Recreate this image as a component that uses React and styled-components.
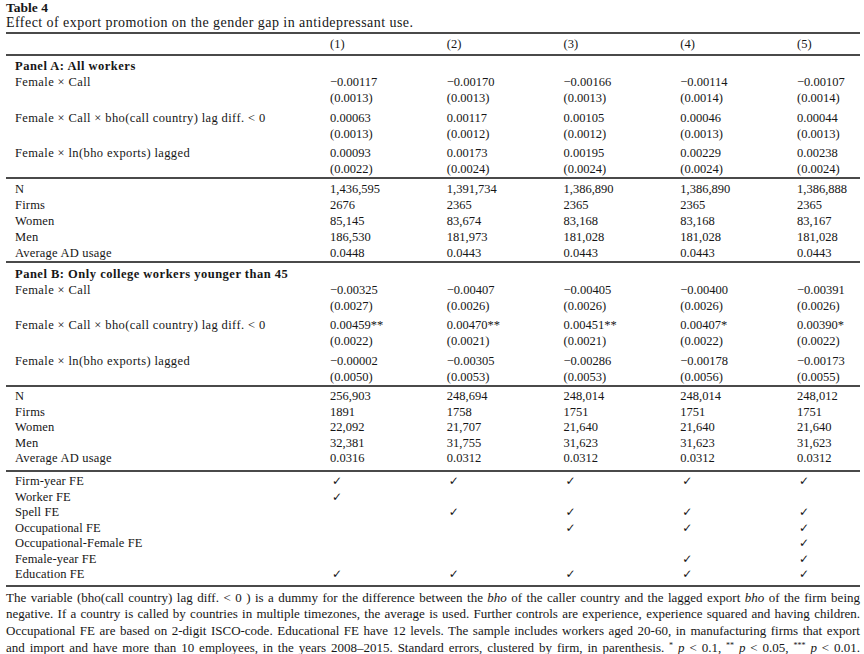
import styled, { createGlobalStyle } from "styled-components";

const GlobalStyle = createGlobalStyle`
    html, body {
        margin: 0;
        padding: 0;
        background: #fff;
    }
    body {
        font-family: "Liberation Serif", "Times New Roman", serif;
        color: #161616;
    }
`;

const Page = styled.div`
    padding: 1px 4px 0 6px;
`;

const Title = styled.div`
    font-size: 13.5px;
    font-weight: bold;
    line-height: 14px;
`;

const Subtitle = styled.div`
    font-size: 14px;
    letter-spacing: 0.45px;
    line-height: 15px;
    margin-bottom: 2px;
`;

const Rule = styled.div`
    height: 2px;
    background: #4a4a4a;
`;

const Section = styled.div`
    padding: ${(p) => p.$pad || "2px 0 0 0"};
`;

const Row = styled.div`
    display: grid;
    grid-template-columns: 324px repeat(4, 116.75px) 1fr;
    font-size: 12.5px;
    line-height: ${(p) => p.$h || 16}px;
    height: ${(p) => p.$h || 16}px;
`;

const Label = styled.div`
    padding-left: 9px;
    white-space: nowrap;
    font-weight: ${(p) => (p.$bold ? "bold" : "normal")};
    letter-spacing: ${(p) => p.$ls || 0}px;
`;

const Cell = styled.div`
    white-space: nowrap;
`;

const Check = styled.span`
    display: inline-block;
    font-family: "DejaVu Sans", sans-serif;
    font-size: 12px;
    font-weight: bold;
    line-height: 15px;
    vertical-align: top;
    padding-left: 2px;
`;

const Pair = styled.div`
    margin-bottom: 3.5px;
    &:last-child {
        margin-bottom: 0;
    }
`;

const Note = styled.div`
    padding-top: 2.5px;
    font-size: 13px;
    line-height: 16.8px;
`;

const NoteLine = styled.div`
    text-align: justify;
    text-align-last: justify;
    white-space: nowrap;
`;

const Star = styled.sup`
    font-size: 8px;
    vertical-align: 4px;
    line-height: 0;
`;

const panelA = [
    {
        label: "Female × Call",
        coef: ["−0.00117", "−0.00170", "−0.00166", "−0.00114", "−0.00107"],
        se: ["(0.0013)", "(0.0013)", "(0.0013)", "(0.0014)", "(0.0014)"],
    },
    {
        label: "Female × Call × bho(call country) lag diff. < 0",
        coef: ["0.00063", "0.00117", "0.00105", "0.00046", "0.00044"],
        se: ["(0.0013)", "(0.0012)", "(0.0012)", "(0.0013)", "(0.0013)"],
    },
    {
        label: "Female × ln(bho exports) lagged",
        coef: ["0.00093", "0.00173", "0.00195", "0.00229", "0.00238"],
        se: ["(0.0022)", "(0.0024)", "(0.0024)", "(0.0024)", "(0.0024)"],
    },
];

const statsA = [
    ["N", "1,436,595", "1,391,734", "1,386,890", "1,386,890", "1,386,888"],
    ["Firms", "2676", "2365", "2365", "2365", "2365"],
    ["Women", "85,145", "83,674", "83,168", "83,168", "83,167"],
    ["Men", "186,530", "181,973", "181,028", "181,028", "181,028"],
    ["Average AD usage", "0.0448", "0.0443", "0.0443", "0.0443", "0.0443"],
];

const panelB = [
    {
        label: "Female × Call",
        coef: ["−0.00325", "−0.00407", "−0.00405", "−0.00400", "−0.00391"],
        se: ["(0.0027)", "(0.0026)", "(0.0026)", "(0.0026)", "(0.0026)"],
    },
    {
        label: "Female × Call × bho(call country) lag diff. < 0",
        coef: ["0.00459**", "0.00470**", "0.00451**", "0.00407*", "0.00390*"],
        se: ["(0.0022)", "(0.0021)", "(0.0021)", "(0.0022)", "(0.0022)"],
    },
    {
        label: "Female × ln(bho exports) lagged",
        coef: ["−0.00002", "−0.00305", "−0.00286", "−0.00178", "−0.00173"],
        se: ["(0.0050)", "(0.0053)", "(0.0053)", "(0.0056)", "(0.0055)"],
    },
];

const statsB = [
    ["N", "256,903", "248,694", "248,014", "248,014", "248,012"],
    ["Firms", "1891", "1758", "1751", "1751", "1751"],
    ["Women", "22,092", "21,707", "21,640", "21,640", "21,640"],
    ["Men", "32,381", "31,755", "31,623", "31,623", "31,623"],
    ["Average AD usage", "0.0316", "0.0312", "0.0312", "0.0312", "0.0312"],
];

const effects = [
    ["Firm-year FE", [1, 1, 1, 1, 1]],
    ["Worker FE", [1, 0, 0, 0, 0]],
    ["Spell FE", [0, 1, 1, 1, 1]],
    ["Occupational FE", [0, 0, 1, 1, 1]],
    ["Occupational-Female FE", [0, 0, 0, 0, 1]],
    ["Female-year FE", [0, 0, 0, 1, 1]],
    ["Education FE", [1, 1, 1, 1, 1]],
];

const Coefficients = ({ rows }) =>
    rows.map((row) => (
        <Pair key={row.label}>
            <Row>
                <Label $ls={0.38}>{row.label}</Label>
                {row.coef.map((v, i) => (
                    <Cell key={i}>{v}</Cell>
                ))}
            </Row>
            <Row>
                <Label />
                {row.se.map((v, i) => (
                    <Cell key={i}>{v}</Cell>
                ))}
            </Row>
        </Pair>
    ));

const Stats = ({ rows, h }) =>
    rows.map(([label, ...values]) => (
        <Row key={label} $h={h}>
            <Label $ls={0.2}>{label}</Label>
            {values.map((v, i) => (
                <Cell key={i}>{v}</Cell>
            ))}
        </Row>
    ));

const App = () => (
    <Page>
        <GlobalStyle />
        <Title>Table 4</Title>
        <Subtitle>Effect of export promotion on the gender gap in antidepressant use.</Subtitle>
        <Rule />
        <Row $h={20}>
            <Label />
            {[1, 2, 3, 4, 5].map((n) => (
                <Cell key={n}>({n})</Cell>
            ))}
        </Row>
        <Rule />

        <Section>
            <Row>
                <Label $bold $ls={0.5}>Panel A: All workers</Label>
            </Row>
            <Coefficients rows={panelA} />
        </Section>
        <Rule />
        <Section $pad="1.5px 0 0.5px 0">
            <Stats rows={statsA} h={16} />
        </Section>
        <Rule />

        <Section $pad="2.5px 0 0 0">
            <Row>
                <Label $bold $ls={0.5}>Panel B: Only college workers younger than 45</Label>
            </Row>
            <Coefficients rows={panelB} />
        </Section>
        <Rule />
        <Section $pad="2.5px 0 3px 0">
            <Stats rows={statsB} h={15.5} />
        </Section>
        <Rule />

        <Section $pad="2.5px 0 2.5px 0">
            {effects.map(([label, marks]) => (
                <Row key={label} $h={15.5}>
                    <Label $ls={0.1}>{label}</Label>
                    {marks.map((m, i) => (
                        <Cell key={i}>{m ? <Check>✓</Check> : null}</Cell>
                    ))}
                </Row>
            ))}
        </Section>
        <Rule />

        <Note>
            <NoteLine>
                The variable (bho(call country) lag diff. &lt; 0 ) is a dummy for the difference between the <i>bho</i> of the
                caller country and the lagged export <i>bho</i> of the firm being
            </NoteLine>
            <NoteLine>
                negative. If a country is called by countries in multiple timezones, the average is used. Further controls are
                experience, experience squared and having children.
            </NoteLine>
            <NoteLine>
                Occupational FE are based on 2-digit ISCO-code. Educational FE have 12 levels. The sample includes workers aged
                20-60, in manufacturing firms that export
            </NoteLine>
            <NoteLine>
                and import and have more than 10 employees, in the years 2008–2015. Standard errors, clustered by firm, in
                parenthesis. <Star>*</Star> <i>p</i> &lt; 0.1, <Star>**</Star> <i>p</i> &lt; 0.05, <Star>***</Star>{" "}
                <i>p</i> &lt; 0.01.
            </NoteLine>
        </Note>
    </Page>
);

export default App;
